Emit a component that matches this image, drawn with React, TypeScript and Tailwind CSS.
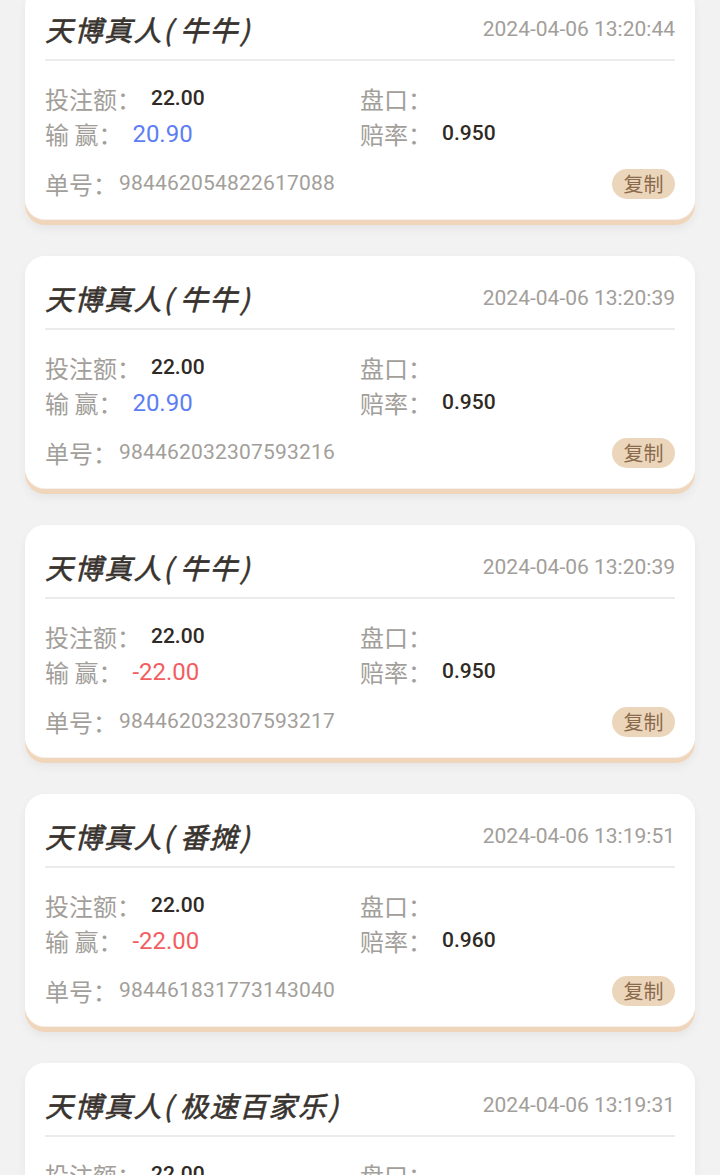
import React from 'react';

type Record = {
  game: string;
  time: string;
  bet: string;
  win: string;
  odds: string;
  orderNo: string;
};

const records: Record[] = [
  { game: '牛牛', time: '2024-04-06 13:20:44', bet: '22.00', win: '20.90', odds: '0.950', orderNo: '984462054822617088' },
  { game: '牛牛', time: '2024-04-06 13:20:39', bet: '22.00', win: '20.90', odds: '0.950', orderNo: '984462032307593216' },
  { game: '牛牛', time: '2024-04-06 13:20:39', bet: '22.00', win: '-22.00', odds: '0.950', orderNo: '984462032307593217' },
  { game: '番摊', time: '2024-04-06 13:19:51', bet: '22.00', win: '-22.00', odds: '0.960', orderNo: '984461831773143040' },
  { game: '极速百家乐', time: '2024-04-06 13:19:31', bet: '22.00', win: '-22.00', odds: '0.950', orderNo: '984461746236956672' },
];

const cjk = "font-['Noto_Sans_CJK_SC',sans-serif]";
const num = "font-['Roboto','Noto_Sans_CJK_SC',sans-serif]";

function RecordCard({ r }: { r: Record }) {
  const lose = r.win.startsWith('-');
  return (
    <div className="rounded-[20px] bg-gradient-to-b from-white via-[#f7e9db] to-[#efd5ba] pb-[6px] shadow-[0_4px_10px_rgba(0,0,0,0.05)]">
      <div className="rounded-[20px] bg-white px-5 pt-[24px] pb-[19px] shadow-[0_1px_0_#f5f0eb]">
        {/* header */}
        <div className="flex items-center justify-between border-b-2 border-[#ebebeb] pb-[12px]">
          <span
            className={`${cjk} text-[28px] leading-[36px] font-normal italic tracking-[1.5px] text-[#38332e] [-webkit-text-stroke:0.6px_#38332e]`}
          >
            天博真人<span className="mr-[6px]">(</span>{r.game}<span className="ml-[1px]">)</span>
          </span>
          <span className={`${num} text-[21px] leading-[28px] text-[#a29e9a]`}>{r.time}</span>
        </div>

        {/* amounts */}
        <div className="grid grid-cols-2 pt-[20px]">
          <div className="flex flex-col">
            <div className="flex h-[35px] items-center">
              <span className={`${cjk} text-[24px] text-[#a29e9a]`}>投注额：</span>
              <span className={`${num} ml-[10px] text-[21px] font-medium text-[#2f2a25]`}>{r.bet}</span>
            </div>
            <div className="flex h-[35px] items-center">
              <span className={`${cjk} text-[24px] text-[#a29e9a]`}>输 赢：</span>
              <span className={`${num} ml-[10px] text-[24px] ${lose ? 'text-[#f25d61]' : 'text-[#5d7ef3]'}`}>{r.win}</span>
            </div>
          </div>
          <div className="flex flex-col">
            <div className="flex h-[35px] items-center">
              <span className={`${cjk} text-[24px] text-[#a29e9a]`}>盘口：</span>
            </div>
            <div className="flex h-[35px] items-center">
              <span className={`${cjk} text-[24px] text-[#a29e9a]`}>赔率：</span>
              <span className={`${num} ml-[10px] text-[21px] font-medium text-[#2f2a25]`}>{r.odds}</span>
            </div>
          </div>
        </div>

        {/* order number */}
        <div className="mt-[17px] flex h-[32px] items-center justify-between">
          <div className="flex items-center">
            <span className={`${cjk} text-[24px] text-[#a29e9a]`}>单号：</span>
            <span className={`${num} ml-[2px] text-[21px] tracking-[0.2px] text-[#a29e9a]`}>{r.orderNo}</span>
          </div>
          <button className={`${cjk} flex h-[30px] w-[63px] items-center justify-center rounded-full bg-[#ecd6bb] text-[20px] text-[#8a6a4d]`}>
            复制
          </button>
        </div>
      </div>
    </div>
  );
}

export default function App() {
  return (
    <main className="h-[1175px] overflow-hidden bg-[#f2f2f2]">
      <div className="-mt-[13px] flex flex-col gap-[31px] px-[25px]">
        {records.map((r, i) => (
          <RecordCard key={i} r={r} />
        ))}
      </div>
    </main>
  );
}
